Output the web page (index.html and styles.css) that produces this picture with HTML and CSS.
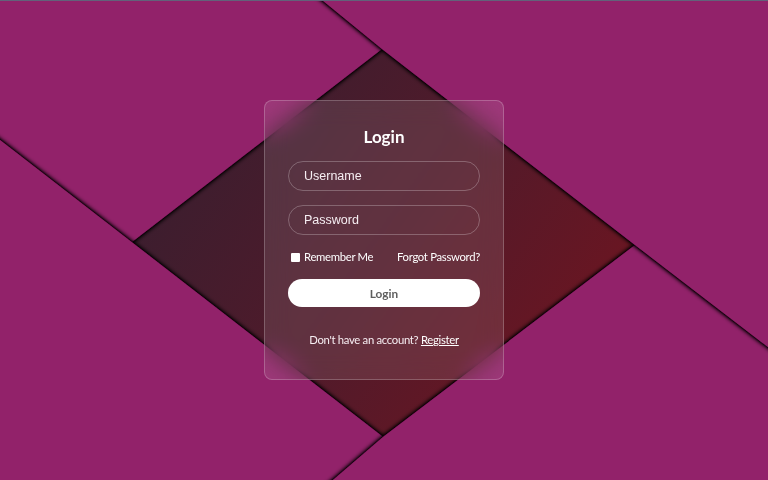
FILE: index.html
```html
<!DOCTYPE html>
<html lang="en">
<head>
<meta charset="utf-8">
<title>Login</title>
<link rel="stylesheet" href="styles.css">
</head>
<body>
<svg class="bg" viewBox="0 0 768 480" preserveAspectRatio="none" xmlns="http://www.w3.org/2000/svg" aria-hidden="true">
  <defs>
    <linearGradient id="under" gradientUnits="userSpaceOnUse" x1="180" y1="120" x2="600" y2="420">
      <stop offset="0" stop-color="#3a1e2f"/>
      <stop offset="0.5" stop-color="#521a2a"/>
      <stop offset="1" stop-color="#72141f"/>
    </linearGradient>
    <filter id="sh" filterUnits="userSpaceOnUse" x="-400" y="-400" width="1800" height="1500">
      <feGaussianBlur in="SourceAlpha" stdDeviation="2.8"/>
      <feComponentTransfer><feFuncA type="linear" slope="2.1"/></feComponentTransfer>
      <feMerge><feMergeNode/><feMergeNode in="SourceGraphic"/></feMerge>
    </filter>
  </defs>
  <rect x="0" y="0" width="768" height="480" fill="url(#under)"/>
  <polygon class="sheet" filter="url(#sh)" points="-200,498.3 704.5,-200 -200,-200"/>
  <polygon class="sheet" filter="url(#sh)" points="-200,-15 1100,992.5 -200,992.5"/>
  <polygon class="sheet" filter="url(#sh)" points="1219,-200 635,245 383,437 77,700 1300,700 1300,-200"/>
  <polygon class="sheet" filter="url(#sh)" points="77,-200 322,0 382,49 635,245 1100,602 1100,-200"/>
  <rect x="0" y="0" width="768" height="1" fill="#62627a"/>
</svg>
<main class="page">
  <form class="card">
    <h1 class="title">Login</h1>
    <input class="field" type="text" placeholder="Username">
    <input class="field" type="password" placeholder="Password">
    <div class="options">
      <label class="remember"><input class="check" type="checkbox"><span>Remember Me</span></label>
      <a class="forgot" href="#">Forgot Password?</a>
    </div>
    <button class="btn" type="button">Login</button>
    <p class="signup">Don't have an account? <a class="signup-link" href="#">Register</a></p>
  </form>
</main>
</body>
</html>
```
FILE: styles.css
```css
* { box-sizing: border-box; }
html, body { margin: 0; padding: 0; width: 100%; height: 100%; overflow: hidden; }
body {
  background: #92216b;
  font-family: "Lato", "Open Sans", sans-serif;
  color: #fff;
}
.bg {
  position: fixed;
  top: 0; left: 0;
  width: 768px; height: 480px;
  z-index: 0;
}
.sheet { fill: #92216b; }
.page {
  position: relative;
  z-index: 1;
  height: 100%;
  display: flex;
  align-items: center;
  justify-content: center;
}
.card {
  width: 240px;
  height: 280px;
  padding: 24px 23px 0;
  display: flex;
  flex-direction: column;
  border: 1px solid rgba(255, 255, 255, 0.22);
  border-radius: 8px;
  background: rgba(255, 255, 255, 0.1);
  backdrop-filter: blur(12px);
  -webkit-backdrop-filter: blur(12px);
}
.title {
  margin: 0 0 12px;
  font-size: 17px;
  line-height: 24px;
  font-weight: 700;
  text-align: center;
}
.field {
  height: 30px;
  width: 100%;
  margin: 0 0 14px;
  padding: 0 15px;
  border: 1px solid rgba(255, 255, 255, 0.25);
  border-radius: 15px;
  background: transparent;
  color: #fff;
  font-family: "Liberation Sans", Arial, sans-serif;
  font-size: 12.5px;
  outline: none;
}
.field::placeholder { color: #f6eef2; opacity: 1; }
.options {
  margin-top: 1px;
  display: flex;
  justify-content: space-between;
  align-items: center;
  height: 14px;
  font-size: 11.3px;
  line-height: 14px;
  letter-spacing: -0.3px;
}
.remember {
  display: flex;
  align-items: center;
  gap: 4px;
  padding-left: 3px;
}
.check {
  appearance: none;
  -webkit-appearance: none;
  margin: 0;
  width: 9px;
  height: 9px;
  background: #fff;
  border-radius: 1px;
}
.forgot { color: #fff; text-decoration: none; }
.btn {
  margin-top: 15px;
  height: 28px;
  width: 100%;
  border: none;
  border-radius: 14px;
  background: #fff;
  color: #5e5e5e;
  font-family: "Lato", "Open Sans", sans-serif;
  font-size: 11.8px;
  font-weight: 700;
}
.signup {
  margin: 26px 0 0;
  font-size: 11.3px;
  line-height: 14px;
  letter-spacing: -0.3px;
  text-align: center;
  color: #f6eef2;
}
.signup-link { color: #fff; text-decoration: underline; }
```
